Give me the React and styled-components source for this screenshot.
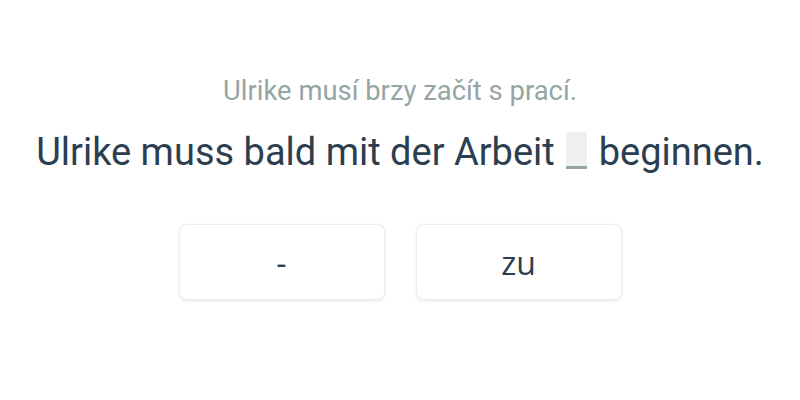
import React from "react"
import styled, { createGlobalStyle } from "styled-components"

const GlobalStyle = createGlobalStyle`
  html, body {
    margin: 0;
    padding: 0;
    background: #ffffff;
  }
`

const Page = styled.div`
  width: 800px;
  height: 400px;
  display: flex;
  flex-direction: column;
  align-items: center;
  font-family: Roboto, "Liberation Sans", sans-serif;
`

const Hint = styled.div`
  margin-top: 75px;
  font-size: 27.4px;
  line-height: 32px;
  color: #95a5a6;
`

const Sentence = styled.div`
  margin-top: 23px;
  font-size: 38px;
  line-height: 44px;
  color: #2c3e50;
  white-space: nowrap;
`

const Blank = styled.span`
  display: inline-block;
  width: 21px;
  height: 34px;
  margin: 0 2px;
  vertical-align: -4px;
  background: #eef0f1;
  border-bottom: 3px solid #95a5a6;
`

const Choices = styled.div`
  margin-top: 51px;
  display: flex;
  gap: 33px;
`

const Choice = styled.button`
  width: 204px;
  height: 74px;
  border: none;
  border-radius: 7px;
  background: #ffffff;
  box-shadow: 0 0 0 1px #ececec, 0 1px 4px rgba(0, 0, 0, 0.14);
  font-family: "Open Sans", Roboto, sans-serif;
  font-size: 32px;
  color: #2c3e50;
  cursor: pointer;
`

export default function App() {
  return (
    <Page>
      <GlobalStyle />
      <Hint>Ulrike musí brzy začít s prací.</Hint>
      <Sentence>
        Ulrike muss bald mit der Arbeit <Blank /> beginnen.
      </Sentence>
      <Choices>
        <Choice>-</Choice>
        <Choice>zu</Choice>
      </Choices>
    </Page>
  )
}
